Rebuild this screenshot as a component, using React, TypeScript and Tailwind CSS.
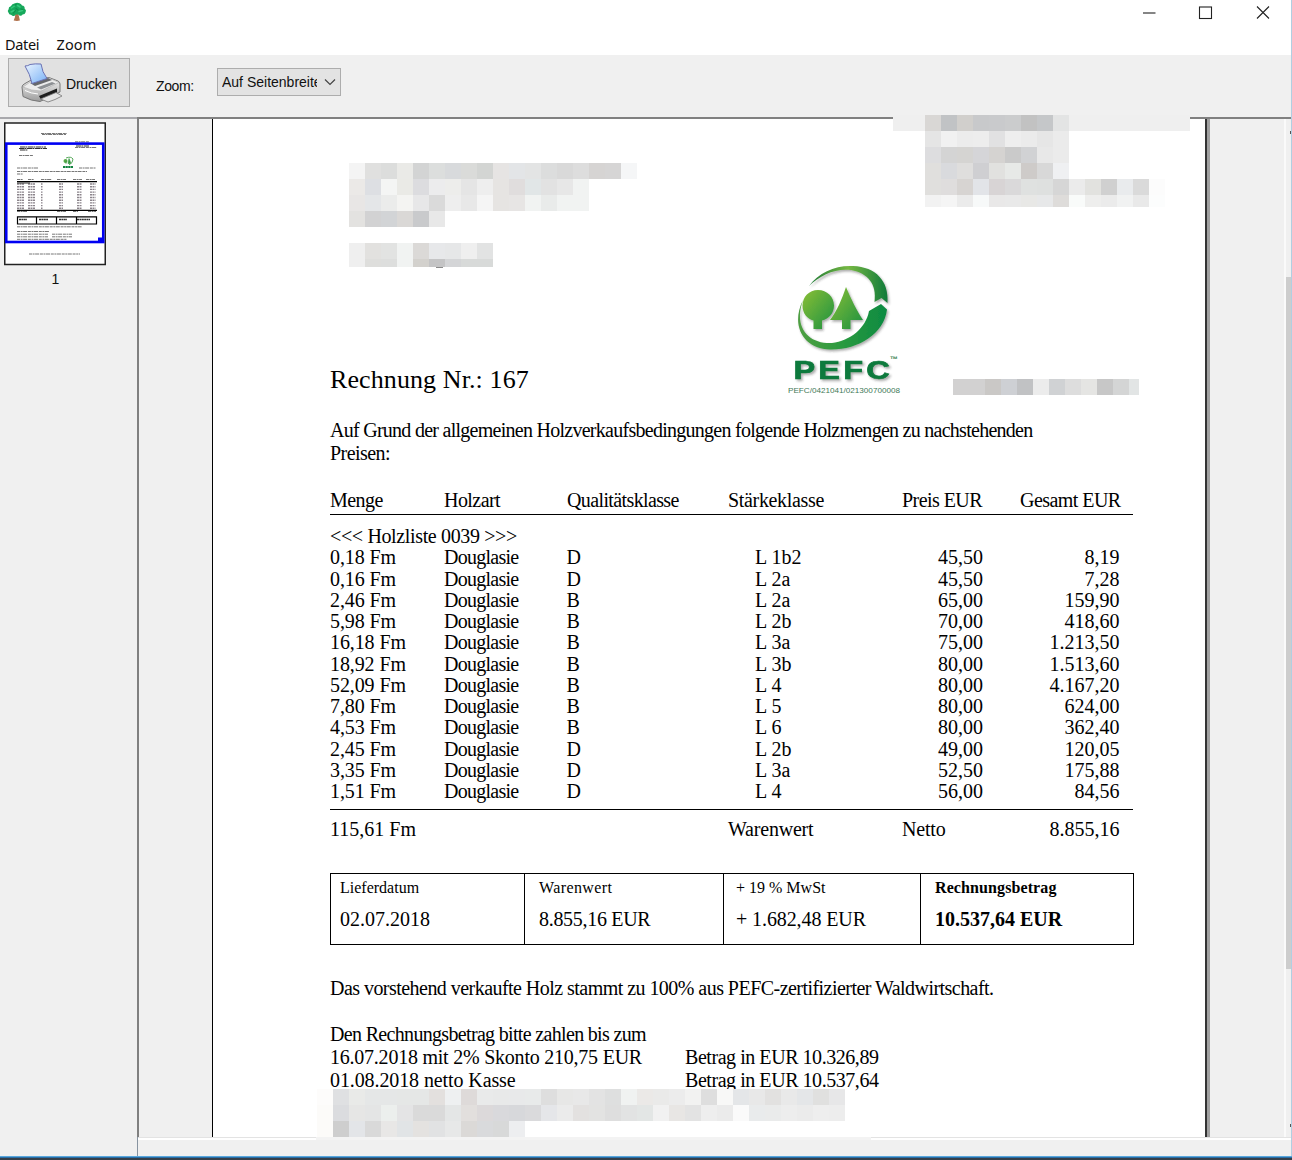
import React from "react";

type Row = [string, string, string, string, string, string];

const ITEMS: Row[] = [
  ["0,18 Fm", "Douglasie", "D", "L 1b2", "45,50", "8,19"],
  ["0,16 Fm", "Douglasie", "D", "L 2a", "45,50", "7,28"],
  ["2,46 Fm", "Douglasie", "B", "L 2a", "65,00", "159,90"],
  ["5,98 Fm", "Douglasie", "B", "L 2b", "70,00", "418,60"],
  ["16,18 Fm", "Douglasie", "B", "L 3a", "75,00", "1.213,50"],
  ["18,92 Fm", "Douglasie", "B", "L 3b", "80,00", "1.513,60"],
  ["52,09 Fm", "Douglasie", "B", "L 4", "80,00", "4.167,20"],
  ["7,80 Fm", "Douglasie", "B", "L 5", "80,00", "624,00"],
  ["4,53 Fm", "Douglasie", "B", "L 6", "80,00", "362,40"],
  ["2,45 Fm", "Douglasie", "D", "L 2b", "49,00", "120,05"],
  ["3,35 Fm", "Douglasie", "D", "L 3a", "52,50", "175,88"],
  ["1,51 Fm", "Douglasie", "D", "L 4", "56,00", "84,56"],
];

// Redaction mosaics: every row lists the grey tones of its tiles.
const SENDER = [
  "f4f4f4 e0e0df dcdddc eaeae7 d3d4d4 dcdedd d8dadc dadbd9 d3d5d3 e6e4e3 e3e5e7 e3e4e4 dcdddd d9d9d9 dddddd d6d4d3 d6d5d5 f5f6f7",
  "ebe9e7 dddfe3 f4f5f4 eaeae6 dcdcdf ececed ededeb e5e5e5 eeeeee e6e4e2 e0dddd e1e6e7 e2e2e2 e7e7e7 f1f3f2",
  "e8e6e5 e4e6e8 ebeceb f4f4f2 e7e7e8 dadada eeeeee e8e8e8 f5f5f5 e6e4e2 e7e5e4 f1f3f2 e9ebea f1f3f2 f1f3f2",
  "e3e2e0 d2d2d3 d2d4d6 dad8d6 c9cacc e8e8e8",
];
const DATE_A = ["efefef e2e1df e2e3e2 f1f3f2 dbd9d7 e7e8ea e6e7e8 efefef e2e3e3"];
const DATE_B = ["efefef dededc dddedd f1f3f2 d3d1cd c4c4c5 d4d5d7 d8dad9 d8dad9"];
const ADDRESS = [
  "d9d7d5 c1c3c5 d1cfcc c8c9cb c9cacc cbcccd c2c2c2 c5c7c9 e3e4e4",
  "e5e5e5 f1f1f1 ececec ededed e1e1e2 eeeeee ebebeb e6e6e6 ebebeb",
  "dddddf d4d4d4 d5d4d2 d5d5d8 d5d3d1 cacaca d1d2d4 e8e8e8 ebebeb",
  "e0dfdd d9dadd dfdedd cfcfd2 e1e1df e7e9e7 cecbc9 d8d8d8 eff0f2",
  "e0dfdd dfdddd d7d4d2 e2e4e8 d8d4d5 dad9da dfe1e0 dee0df d6d6d6 ebebeb e2e2df d0d0d0 e9ebed dadada fcfcfc",
];
const ADDRESS_END = ["f2f2f2 f5f5f5 ebebeb f7f9f9 e9e8e8 e9e9e9 e8e8e6 e7e8e9 dedcda f9fbfa eeeeed ebebeb f1f2f2 e9e9e9 fcfdfd"];
const PLACE = ["d2d1d1 d2d1d1 cac8c6 ced0d4 c1c2c4 ececec d0d2d4 dddddd e5e5e3 c7c7c7 d4d5d5 e2e5e5"];
const FOOT = [
  "fdfcfb dfe0e2 e9eae8 e5e7e7 e5e7e7 e5e7e6 e5e7e6 e3e0de eef0f1 dedad9 e9eaea e8e9e9 e8e9ea e8eaea dedede e7e7e6 e8e8e8 e3e3e3 dedfdf f0f2f1 ebe9e7 eaeae9 ececec f2f2f1 dedede f8f8f7 e4e6e8 e8e8e8 e2e1e0 e9e9e9 e4e6e8 e0e0df e7e7e8",
  "fcfbf9 dbdcdf e6e6e5 e4e5e5 ecefed e4e4e5 dadada dadada e4e6e6 e2dfdd dcd9da d9d9dc d7d8db dadadc e5e6e9 ebebeb e3e1e0 e3e3e2 dedede e2e3e3 e3e6e5 f1f1f1 e8e6e4 e3e3e3 eeeeee ebebeb fafafa e9ebec eaebeb ededed ebebeb eeeeee ededed",
  "fcfbf9 cecece e3e5e8 d9d9d9 e8e7e6 e1e4e6 e4e2e0 e1e2e3 e7e8e8 dbd9d7 d9dadc d8d9d9 edeef0",
];

function Mosaic({ rows, tile = "h-4 w-4" }: { rows: string[]; tile?: string }) {
  return (
    <div className="flex flex-col">
      {rows.map((row, y) => (
        <div key={y} className="flex">
          {row.split(" ").map((tone, x) => (
            <span key={x} className={`block shrink-0 ${tile}`} style={{ backgroundColor: `#${tone}` }} />
          ))}
        </div>
      ))}
    </div>
  );
}

function TreeIcon() {
  return (
    <svg className="h-5 w-5" viewBox="0 0 20 20">
      <path d="M8.3 11h2.6l1 3 1 4.6-3 .4-3.2-.6 1.3-3.4z" fill="#b0714c" />
      <path
        d="M8 1.2Q10 .2 12.5 1.2 14.5 1.8 15 3.6 18 4 17.6 6.5 19.8 8 18.6 10.2 18 12.4 15.6 12.4 14.5 14.4 12.4 13.6 11.6 12 10 12.6 8.6 12 7.6 13.8 5.6 14.6 4.4 13 1.8 13 1.4 10.6 0 9 1.6 7.2 1.4 4.6 3.8 4.2 5 1.6 8 1.2z"
        fill="#17a85b"
      />
      <path d="M4.5 6l3-2M10.5 3.5l2.5 1.5M4 10l3-1.5M12 9.5l3.5-1" stroke="#35c87c" strokeWidth="1.5" strokeLinecap="round" />
      <path d="M6.5 11l2-2.5M9 6.5l2 1.5M14 7l2 .5M8 3l1-.5" stroke="#0f8f4c" strokeWidth="1.2" strokeLinecap="round" />
    </svg>
  );
}

function PrinterIcon() {
  return (
    <svg className="h-[40px] w-[42px]" viewBox="0 0 42 40">
      <defs>
        <linearGradient id="paper" x1="0" y1="0" x2="1" y2="1">
          <stop offset="0" stopColor="#eaf4ff" />
          <stop offset="1" stopColor="#78b1f5" />
        </linearGradient>
        <linearGradient id="body" x1="0" y1="0" x2="0" y2="1">
          <stop offset="0" stopColor="#f6f6f6" />
          <stop offset="1" stopColor="#9c9c9c" />
        </linearGradient>
      </defs>
      <path d="M1 24Q1 22 4 20.5L12 16 28 14.5 37 18Q39 19 39 21V29L19 38.5Q10 38 2 33.5z" fill="url(#body)" stroke="#777" strokeWidth="1" />
      <path d="M2 24L12 17 28 15 38 19.5 20 28Q10 28 2 24z" fill="#ececec" stroke="#aaa" strokeWidth=".6" />
      <path d="M9 20L27 15 31 17 14 23z" fill="#66686c" />
      <path d="M4 3Q7 3 9 1.5 14 .5 20 1 21 9 26 15.5L11 20.5Q9 11 4 3z" fill="url(#paper)" stroke="#6a72b4" strokeWidth="1" />
      <path d="M16 24.5L31 19 34.5 20.5 20 26.5z" fill="#8d9094" />
      <path d="M18 33L36 25.5V29.5L20 36.5z" fill="#1f1f1f" />
      <path d="M19.5 36L35 29.5 41 33Q34 37 27 39z" fill="#e6e6e6" stroke="#777" strokeWidth=".8" />
      <path d="M4 27.5Q10 30.5 17 31" stroke="#fff" fill="none" />
    </svg>
  );
}

function PefcLogo() {
  return (
    <svg className="h-[140px] w-[130px]" viewBox="780 260 130 140">
      <defs>
        <linearGradient id="leaf" x1="0" y1="0" x2="1" y2="1">
          <stop offset="0" stopColor="#8abf35" />
          <stop offset="1" stopColor="#1c9141" />
        </linearGradient>
        <linearGradient id="ringTop" x1="0" y1="0" x2="1" y2="0">
          <stop offset="0" stopColor="#1f7a36" />
          <stop offset=".5" stopColor="#76b843" />
          <stop offset="1" stopColor="#0f7a3a" />
        </linearGradient>
        <linearGradient id="ringLow" x1="0" y1="0" x2="1" y2="0">
          <stop offset="0" stopColor="#4f9f42" />
          <stop offset=".5" stopColor="#2a9a40" />
          <stop offset="1" stopColor="#0c8a42" />
        </linearGradient>
        <filter id="shade" x="-20%" y="-20%" width="140%" height="140%">
          <feDropShadow dx="1.4" dy="1.8" stdDeviation=".8" floodColor="#333" floodOpacity=".4" />
        </filter>
      </defs>
      <g filter="url(#shade)">
        <path
          d="M809 286C819 272 836 265 853 266C876 267 889 281 887.500 303L881.500 298L874.500 302C877 284 868 273 851 270C836 268 820 275 809 286z"
          fill="url(#ringTop)"
        />
        <path
          d="M803 300C790 326 804 349 830 349.500C858 350 884 334 887 309.500L881 304L869 311C866 328 850 341 832 343C809 344 793 328 803 300z"
          fill="url(#ringLow)"
        />
        <path d="M818 290C827 290 834 297 834 305.500C834 313 829 319 822 320.500V329H813.500V320.500C807 319 802.500 313 802.500 305.500C802.500 297 809 290 818 290z" fill="url(#leaf)" />
        <path d="M846 287C851 299 857 311 863 320H850.500V329H842V320H830C837 311 842 299 846 287z" fill="url(#leaf)" />
      </g>
      <g transform="translate(793.500 378.500) scale(1.25 1)">
        <text
          x="0"
          y="0"
          textLength="77"
          lengthAdjust="spacing"
          fontFamily="Liberation Sans"
          fontWeight="700"
          fontSize="26"
          fill="#107a3d"
          stroke="#107a3d"
          strokeWidth=".7"
          filter="url(#shade)"
        >
          PEFC
        </text>
      </g>
      <text x="890" y="362" fontFamily="Liberation Sans" fontWeight="700" fontSize="8" textLength="9" fill="#2d7d4a">
        ™
      </text>
      <text x="788" y="392.5" textLength="112" lengthAdjust="spacingAndGlyphs" fontFamily="Liberation Sans" fontSize="8" fill="#3f7a58">
        PEFC/0421041/021300700008
      </text>
    </svg>
  );
}

function Thumbnail() {
  const rows = [0, 1, 2, 3, 4, 5, 6, 7, 8, 9];
  return (
    <svg className="h-[144px] w-[103px]" viewBox="4 122 103 144">
      <rect x="4.750" y="123" width="100.5" height="141.5" fill="#fff" stroke="#222" strokeWidth="1.5" />
      <g stroke="#777" strokeWidth="1" strokeDasharray="3 .6 2 .5 4 .8" fill="none">
        <path d="M41 133.5h26M42 134.5h24M75 141.8h14M75 147.5h22M19 155.5h14M17 168h21M79 168h17M17 171.5h70M17 174h6" />
        <path d="M17 179.5h6M28 179.5h6M41 179.5h11M57 179.5h9M73 179.5h9M86 179.5h9" />
        <path d="M17 211.5h10M57 211.5h9M73 211.5h5M88 211.5h8M17 226.8h65M17 231.5h32M17 234.2h31M52 234.2h20M17 236.8h31M52 236.8h20M17 239.3h50M29 254h51" />
      </g>
      <path d="M20 150h8M19 148.5h28M20 147h26M76 146h13" stroke="#333" strokeWidth="1" strokeDasharray="5 .4 2 .6" />
      <g stroke="#8b848b" strokeWidth="1.4" strokeDasharray="2 .5">
        {rows.map((r) => (
          <path key={r} d={`M17 ${184 + r * 2.7}h7M28 ${184 + r * 2.7}h7M41 ${184 + r * 2.7}h1.5M59 ${184 + r * 2.7}h4M77 ${184 + r * 2.7}h5M90 ${184 + r * 2.7}h5.5`} />
        ))}
      </g>
      <circle cx="65.500" cy="161" r="2" fill="#55a947" />
      <path d="M69 158.500l2 5h-3zM66 161v3" stroke="#33963f" strokeWidth=".6" fill="#33963f" />
      <path d="M66 158q5-2 7 1q0 4-4 6" stroke="#57a95b" fill="none" />
      <path d="M63 167h10" stroke="#12823f" strokeWidth="2.2" strokeDasharray="2.2 .4" />
      <path d="M17 181.700H97M17 210.300H97" stroke="#000" strokeWidth="1.3" />
      <path d="M17 183h13" stroke="#333" />
      <path d="M17.500 216.800H96.500V224H17.500zM36.500 217v7M56.500 217v7M76.500 217v7" fill="none" stroke="#000" strokeWidth="1.2" />
      <path d="M19 219.500h8M39 219.500h9M59 219.500h8M77 219.500h13" stroke="#333" strokeWidth="1.6" strokeDasharray="2 .4" />
      <rect x="6.250" y="143.600" width="97" height="98.400" fill="none" stroke="#0000f2" strokeWidth="2.6" />
      <rect x="98" y="237.500" width="6" height="5" fill="#0000f2" />
    </svg>
  );
}

function WindowChrome() {
  return (
    <header className="h-[55px] shrink-0 bg-white">
      <div className="flex h-[33px] items-start justify-between pl-[7px] pt-[2px]">
        <TreeIcon />
        <svg className="h-5 w-[151px]" viewBox="1141 2 151 20" fill="none" stroke="#222" strokeWidth="1.1">
          <path d="M1143 13H1155.500" />
          <rect x="1199.500" y="7" width="12" height="11.500" />
          <path d="M1257 6.500L1269 18.500M1269 6.500L1257 18.500" />
        </svg>
      </div>
      <nav className="flex pl-[5px] font-['Noto_Sans'] text-[14.5px] leading-[22px]">
        <span className="w-[51.5px] tracking-[-0.35px]">Datei</span>
        <span className="tracking-[0.1px]">Zoom</span>
      </nav>
    </header>
  );
}

function Toolbar() {
  return (
    <div className="flex h-[62px] shrink-0 items-start bg-[#f0f0f0] pl-2 font-['Liberation_Sans'] text-[14px]">
      <button className="mt-[3px] flex h-[49px] w-[122px] items-center border border-[#adadad] bg-[#e1e1e1] pl-3">
        <PrinterIcon />
        <span className="ml-[3px] mt-[3px] tracking-[-0.2px]">Drucken</span>
      </button>
      <span className="ml-[26px] mt-[21px] w-[61px] tracking-[-0.4px]">Zoom:</span>
      <div className="mt-[13px] flex h-[28px] w-[124px] items-center border border-[#adadad] bg-[#e3e3e3] pl-1">
        <span className="mt-px w-[95px] overflow-hidden whitespace-nowrap">Auf Seitenbreite</span>
        <svg className="ml-[7px] h-2 w-3" viewBox="0 0 12 8" fill="none" stroke="#444" strokeWidth="1.2">
          <path d="M1 1.500L6 6.500 11 1.500" />
        </svg>
      </div>
    </div>
  );
}

type SummaryProps = { label: string; value: string; className: string; labelClass?: string; valueClass?: string };

function SummaryCell({ label, value, className, labelClass = "", valueClass = "" }: SummaryProps) {
  return (
    <div className={`flex flex-col whitespace-nowrap ${className}`}>
      <span className={`mt-[4px] h-5 text-[16px] leading-5 ${labelClass}`}>{label}</span>
      <span className={`mt-[9px] h-6 leading-6 ${valueClass}`}>{value}</span>
    </div>
  );
}

function Invoice() {
  return (
    <article className="flex h-[1018px] w-[992px] flex-col overflow-hidden whitespace-nowrap bg-white pl-[117px] font-['Liberation_Serif'] text-[20px] text-black">
      <div className="ml-[19px] mt-[44px]">
        <Mosaic rows={SENDER} />
      </div>
      <div className="ml-[19px] mt-4 h-[25px]">
        <Mosaic rows={DATE_A} />
        <Mosaic rows={DATE_B} tile="h-2 w-4" />
        <div className="ml-[87px] h-px w-[7px] bg-[#8a8a8a]" />
      </div>
      <div className="-mt-[8px] flex h-[140px]">
        <h1 className="mt-[106px] w-[450px] text-[26px] leading-[28px] tracking-[0.1px]">Rechnung Nr.: 167</h1>
        <PefcLogo />
        <div className="ml-[43px] mt-[119px] h-4 w-[186px] overflow-hidden">
          <Mosaic rows={PLACE} />
        </div>
      </div>
      <p className="mt-[19px] leading-[22.5px] tracking-[-0.73px]">
        Auf Grund der allgemeinen Holzverkaufsbedingungen folgende Holzmengen zu nachstehenden
        <br />
        <span className="tracking-[-0.55px]">Preisen:</span>
      </p>
      <div className="mt-[24px] grid h-[28px] w-[803px] grid-cols-[114px_123px_161px_174px_118px_1fr] border-b border-black leading-[24px] tracking-[-0.55px]">
        <span>Menge</span>
        <span>Holzart</span>
        <span className="tracking-[-0.62px]">Qualitätsklasse</span>
        <span className="tracking-[-0.33px]">Stärkeklasse</span>
        <span>Preis EUR</span>
        <span>Gesamt EUR</span>
      </div>
      <div className="mt-[11.5px] leading-[21.27px] tracking-[-0.36px]">{"<<< Holzliste 0039 >>>"}</div>
      {ITEMS.map((item, i) => (
        <div key={i} className="grid h-[21.27px] grid-cols-[114px_122.5px_188.5px_128px_100px_136.5px] leading-[21.27px]">
          <span className="tracking-[-0.1px]">{item[0]}</span>
          <span className="tracking-[-0.75px]">{item[1]}</span>
          <span>{item[2]}</span>
          <span>{item[3]}</span>
          <span className="text-right">{item[4]}</span>
          <span className="text-right">{item[5]}</span>
        </div>
      ))}
      <div className="mt-[6.5px] grid w-[803px] grid-cols-[398px_174px_217.5px] border-t border-black pt-[7px] leading-6">
        <span>115,61 Fm</span>
        <span className="tracking-[-0.2px]">Warenwert</span>
        <span className="flex justify-between">
          <span className="tracking-[-0.2px]">Netto</span>
          <span>8.855,16</span>
        </span>
      </div>
      <div className="mt-[32px] flex h-[72px] w-[804px] shrink-0 border border-black">
        <SummaryCell className="w-[194px] border-r border-black pl-[9px]" label="Lieferdatum" value="02.07.2018" />
        <SummaryCell
          className="w-[199px] border-r border-black pl-[14px]"
          label="Warenwert"
          labelClass="tracking-[0.4px]"
          value="8.855,16 EUR"
          valueClass="tracking-[-0.3px]"
        />
        <SummaryCell
          className="w-[197px] border-r border-black pl-[12px]"
          label="+ 19 % MwSt"
          value="+ 1.682,48 EUR"
          valueClass="tracking-[-0.1px]"
        />
        <SummaryCell className="pl-[14px] font-bold" label="Rechnungsbetrag" labelClass="tracking-[0.1px]" value="10.537,64 EUR" />
      </div>
      <p className="mt-[31px] leading-6 tracking-[-0.54px]">
        Das vorstehend verkaufte Holz stammt zu 100% aus PEFC-zertifizierter Waldwirtschaft.
      </p>
      <div className="mt-[23px] grid grid-cols-[355px_1fr] leading-[23px] tracking-[-0.45px]">
        <span className="col-span-2 tracking-[-0.67px]">Den Rechnungsbetrag bitte zahlen bis zum</span>
        <span className="tracking-[-0.23px]">16.07.2018 mit 2% Skonto 210,75 EUR</span>
        <span>Betrag in EUR 10.326,89</span>
        <span className="tracking-[-0.1px]">01.08.2018 netto Kasse</span>
        <span>Betrag in EUR 10.537,64</span>
      </div>
      <div className="relative z-10 -ml-[13px] -mt-[3px]">
        <Mosaic rows={FOOT} />
      </div>
    </article>
  );
}

export default function App() {
  return (
    <div className="relative flex h-[1160px] w-[1292px] flex-col overflow-hidden bg-[#f0f0f0] text-[#111]">
      <WindowChrome />
      <Toolbar />
      <div className="flex h-[1020px] shrink-0">
        <aside className="w-[137px] border-t-2 border-[#a9a9ad] pl-1 pt-[3px]">
          <Thumbnail />
          <div className="mt-[4px] w-[103px] text-center font-['Liberation_Sans'] text-[14px] leading-[18px]">1</div>
        </aside>
        <main className="flex w-[1155px] border-l-2 border-t-2 border-[#808080]">
          <div className="ml-[73px] flex border-l border-black">
            <Invoice />
            <div className="w-[2px] bg-[#333]" />
            <div className="w-[3px] bg-[#a0a0a0]" />
          </div>
          <div className="ml-auto flex w-[8px] flex-col items-end border-l-2 border-[#fafafa]">
            <div className="mr-px mt-[12px] h-[3px] w-px bg-[#555]" />
            <div className="mt-[143px] h-[692px] w-[6px] bg-[#cdcdcd]" />
            <div className="mr-px mt-[155px] h-[3px] w-px bg-[#555]" />
          </div>
        </main>
      </div>
      <footer className="flex h-[19px] shrink-0">
        <div className="w-[138px] border-r border-[#8793a0]" />
        <div className="mb-[16px] w-[178px] border-b-2 border-t border-b-white border-t-[#e3e3e3]" />
        <div className="mb-[16px] w-[555px] bg-[#f3f3f3]" />
        <div className="mb-[16px] flex-1 border-b-2 border-t border-b-white border-t-[#e3e3e3]" />
      </footer>
      <div className="h-px shrink-0 bg-[#5aa7dc]" />
      <div className="h-px shrink-0 bg-[#286fa8]" />
      <div className="h-[2px] shrink-0 bg-[#353f49]" />
      <div className="absolute right-0 top-0 h-[1156px] w-px bg-[#b0cfe2]" />
      <div className="absolute left-[893px] top-[115px] w-[297px] bg-[#efefef] pl-8">
        <div className="h-4">
          <Mosaic rows={ADDRESS} />
          <Mosaic rows={ADDRESS_END} tile="h-3 w-4" />
        </div>
      </div>
    </div>
  );
}
